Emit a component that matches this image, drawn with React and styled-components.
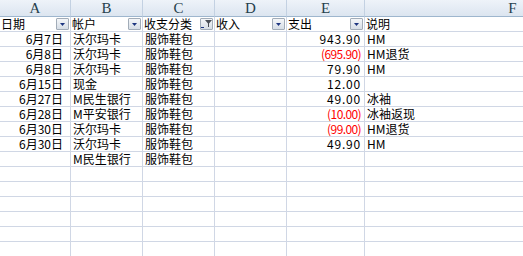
import React from 'react';
import styled, { createGlobalStyle } from 'styled-components';

const GlobalStyle = createGlobalStyle`
  html, body {
    margin: 0;
    padding: 0;
    background: #fff;
    overflow: hidden;
  }
`;

// column widths include the 1px grid line on the right
const COLS = [
  { key: 'A', width: 71 },
  { key: 'B', width: 72 },
  { key: 'C', width: 72 },
  { key: 'D', width: 72 },
  { key: 'E', width: 78 },
  { key: 'F', width: 296 },
];

const HEADERS = [
  { text: '日期', button: 'drop' },
  { text: '帐户', button: 'drop' },
  { text: '收支分类', button: 'filter' },
  { text: '收入', button: 'drop' },
  { text: '支出', button: 'drop' },
  { text: '说明' },
];

const ROWS = [
  ['6月7日', '沃尔玛卡', '服饰鞋包', '', '943.90', 'HM'],
  ['6月8日', '沃尔玛卡', '服饰鞋包', '', '(695.90)', 'HM退货'],
  ['6月8日', '沃尔玛卡', '服饰鞋包', '', '79.90', 'HM'],
  ['6月15日', '现金', '服饰鞋包', '', '12.00', ''],
  ['6月27日', 'M民生银行', '服饰鞋包', '', '49.00', '冰袖'],
  ['6月28日', 'M平安银行', '服饰鞋包', '', '(10.00)', '冰袖返现'],
  ['6月30日', '沃尔玛卡', '服饰鞋包', '', '(99.00)', 'HM退货'],
  ['6月30日', '沃尔玛卡', '服饰鞋包', '', '49.90', 'HM'],
  ['', 'M民生银行', '服饰鞋包', '', '', ''],
];

const EMPTY_ROWS = 8;

const Sheet = styled.div`
  width: 523px;
  height: 256px;
  overflow: hidden;
  display: grid;
  grid-template-columns: ${COLS.map((c) => `${c.width}px`).join(' ')};
  grid-template-rows: 17px;
  grid-auto-rows: 15px;
  align-content: start;
  font-family: "Noto Sans CJK SC", sans-serif;
  font-size: 12px;
  color: #000;
`;

const ColHead = styled.div`
  box-sizing: border-box;
  height: 17px;
  display: flex;
  align-items: center;
  justify-content: center;
  background: linear-gradient(#eef3f9, #dce5f0);
  border-right: 1px solid #c3d1e2;
  border-bottom: 1px solid #9eb6ce;
  font-family: "Liberation Serif", serif;
  font-size: 15px;
  line-height: 16px;
  color: #263f4c;
`;

const Cell = styled.div`
  box-sizing: border-box;
  height: 15px;
  border-right: 1px solid #d0d7e5;
  border-bottom: 1px solid #d0d7e5;
  display: flex;
  align-items: center;
  justify-content: ${({ $align }) => ($align === 'right' ? 'flex-end' : 'flex-start')};
  padding: ${({ $align, $pad }) => ($align === 'right' ? `0 ${$pad}px 0 0` : '0 0 0 2px')};
  line-height: 14px;
  white-space: nowrap;
  color: ${({ $neg }) => ($neg ? '#ff0000' : '#000')};
`;

// amounts: positives sit wider, bracketed negatives tighter
const AmountCell = styled(Cell)`
  letter-spacing: ${({ $neg }) => ($neg ? '-0.6px' : '0.8px')};
`;

const FieldCell = styled(Cell)`
  padding: 0 1px;
  justify-content: space-between;
`;

const DropButton = styled.span`
  box-sizing: border-box;
  width: 13px;
  height: 12px;
  margin-left: auto;
  flex: none;
  display: flex;
  align-items: center;
  justify-content: center;
  border: 1px solid #a2acb8;
  border-radius: 1px;
  background: linear-gradient(#f4f6f9, #d6dde6);
`;

const Arrow = () => (
  <svg width="5" height="3" viewBox="0 0 5 3">
    <path d="M0 0h5L2.5 3z" fill="#1d3580" />
  </svg>
);

const FunnelIcon = () => (
  <svg width="11" height="8" viewBox="0 0 11 8">
    <path d="M0 7.5h3" stroke="#1d3580" strokeWidth="1" />
    <path d="M4 0h7L8 3.5V7H7V3.5z" fill="#4a4f57" />
  </svg>
);

const App = () => {
  const emptyRows = Array.from({ length: EMPTY_ROWS }, () => ['', '', '', '', '', '']);

  return (
    <>
      <GlobalStyle />
      <Sheet>
        {COLS.map((c) => (
          <ColHead key={c.key}>{c.key}</ColHead>
        ))}
        {HEADERS.map((h) => (
          <FieldCell key={h.text}>
            <span>{h.text}</span>
            {h.button && (
              <DropButton>{h.button === 'filter' ? <FunnelIcon /> : <Arrow />}</DropButton>
            )}
          </FieldCell>
        ))}
        {[...ROWS, ...emptyRows].map((row, r) =>
          row.map((value, i) => {
            if (i === 4) {
              return (
                <AmountCell key={`${r}-${i}`} $align="right" $pad={3} $neg={value.startsWith('(')}>
                  {value}
                </AmountCell>
              );
            }
            return (
              <Cell key={`${r}-${i}`} $align={i === 0 ? 'right' : 'left'} $pad={7}>
                {value}
              </Cell>
            );
          })
        )}
      </Sheet>
    </>
  );
};

export default App;
